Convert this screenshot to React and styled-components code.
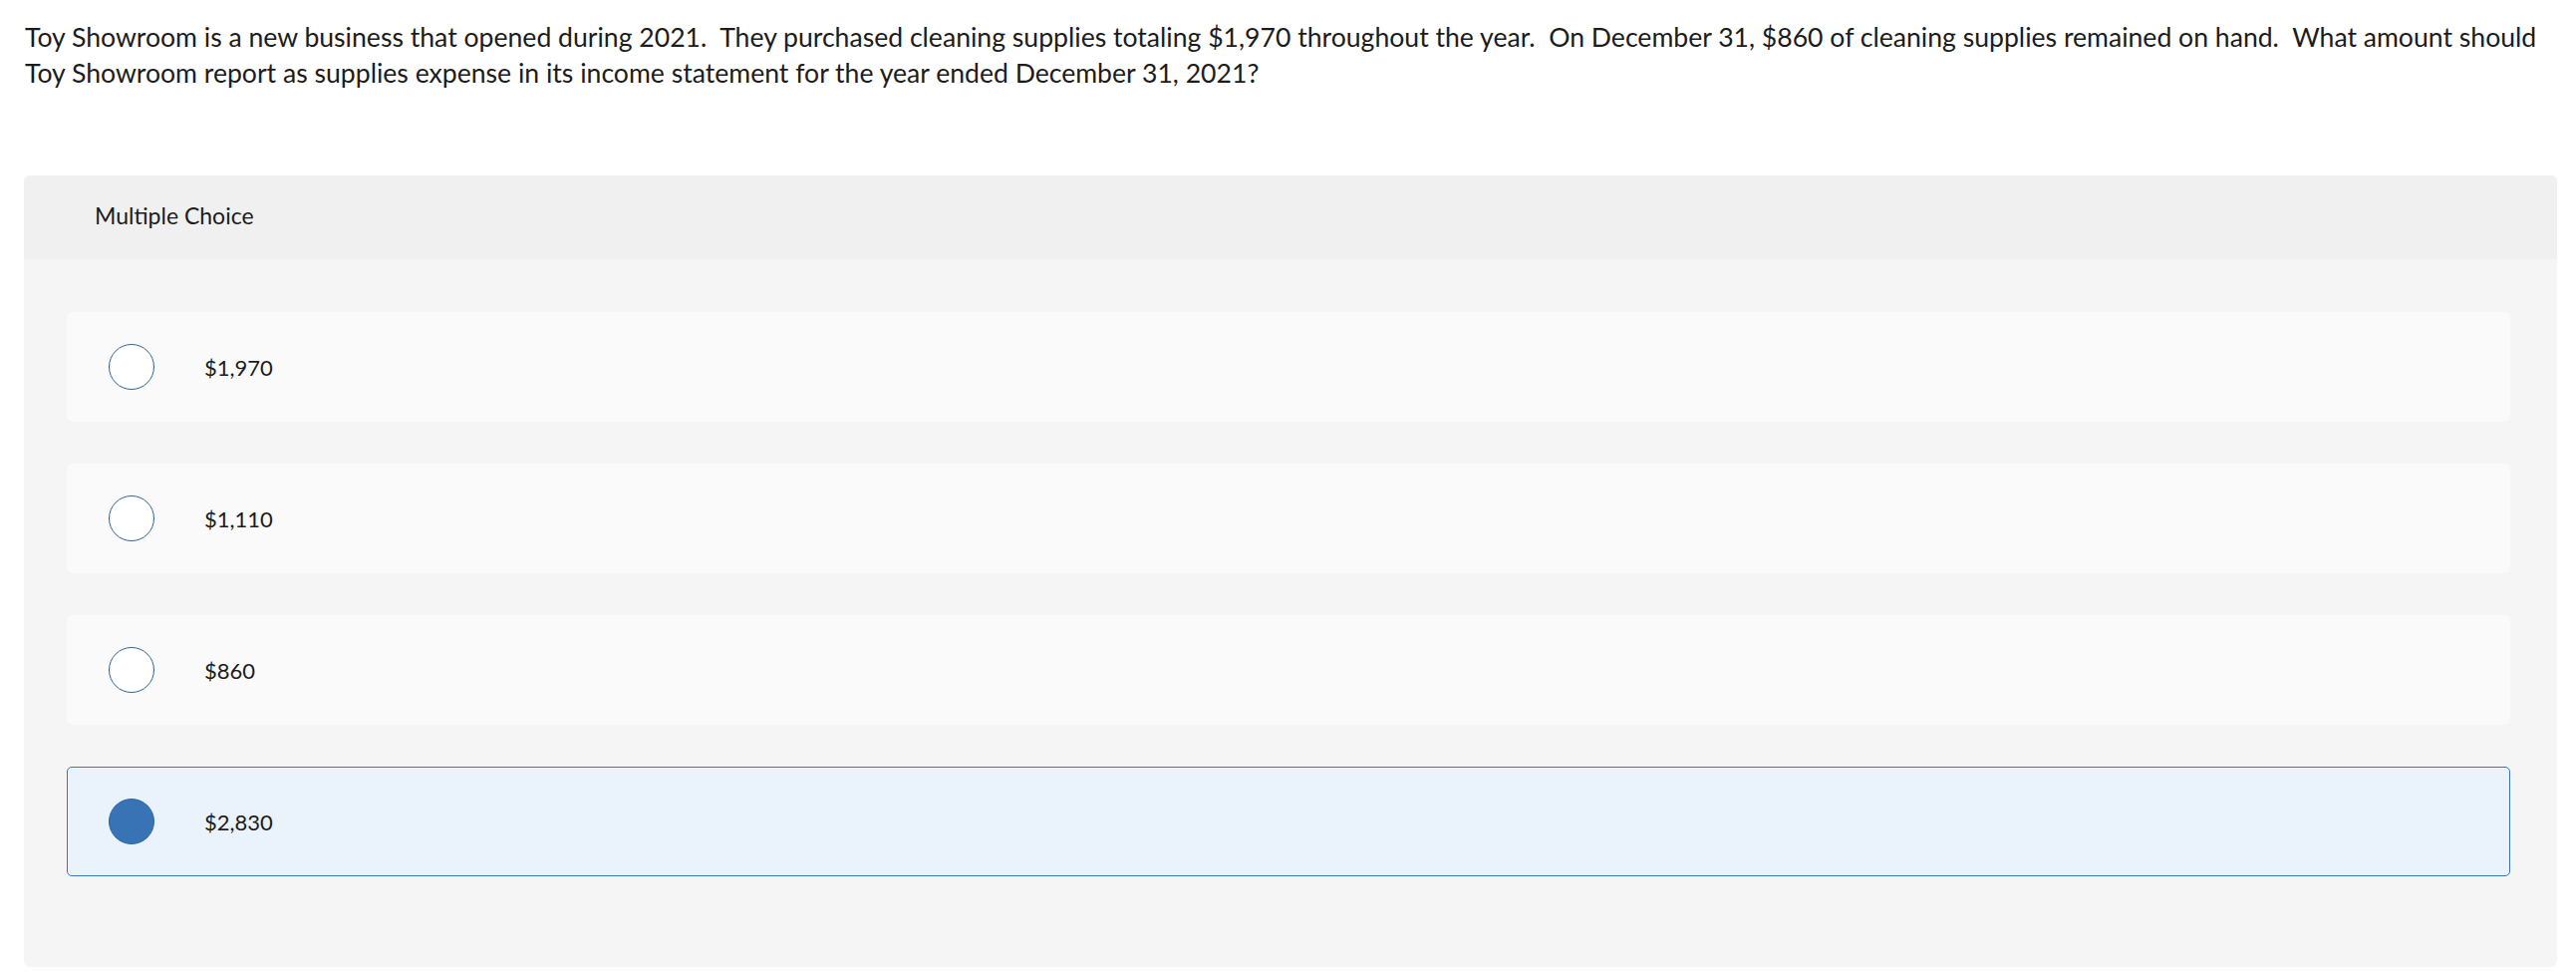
import styled, { createGlobalStyle } from "styled-components";

const GlobalStyle = createGlobalStyle`
  body {
    margin: 0;
    background: #ffffff;
    font-family: Lato, "Open Sans", sans-serif;
    color: #1c1c1c;
  }
`;

const choices = [
  { id: "a", label: "$1,970" },
  { id: "b", label: "$1,110" },
  { id: "c", label: "$860" },
  { id: "d", label: "$2,830", selected: true },
];

export default function App() {
  return (
    <Page>
      <GlobalStyle />
      <Question>
        Toy Showroom is a new business that opened during 2021.&nbsp; They purchased cleaning supplies
        totaling $1,970 throughout the year.&nbsp; On December 31, $860 of cleaning supplies remained on
        hand.&nbsp; What amount should Toy Showroom report as supplies expense in its income statement
        for the year ended December 31, 2021?
      </Question>
      <Panel>
        <PanelHeader>Multiple Choice</PanelHeader>
        <ChoiceList>
          {choices.map((c) => (
            <Choice key={c.id} $selected={c.selected}>
              <Radio $selected={c.selected} />
              <ChoiceLabel>{c.label}</ChoiceLabel>
            </Choice>
          ))}
        </ChoiceList>
      </Panel>
    </Page>
  );
}

const Page = styled.div`
  padding: 19px 19px 7px 24px;
`;

const Question = styled.p`
  margin: 0 0 85px 1px;
  max-width: 2530px;
  font-size: 26.6px;
  line-height: 36px;
`;

const Panel = styled.section`
  background: #f5f5f5;
  border-radius: 6px;
  overflow: hidden;
`;

const PanelHeader = styled.header`
  height: 84px;
  background: #f0f0f0;
  display: flex;
  align-items: center;
  padding-left: 71px;
  padding-bottom: 4px;
  box-sizing: border-box;
  font-size: 23px;
`;

const ChoiceList = styled.div`
  display: flex;
  flex-direction: column;
  gap: 42px;
  padding: 53px 47px 91px 43px;
`;

const Choice = styled.div`
  height: 110px;
  box-sizing: border-box;
  display: flex;
  align-items: center;
  padding-left: ${(p) => (p.$selected ? "41px" : "42px")};
  border-radius: 5px;
  background: ${(p) => (p.$selected ? "#eaf2fb" : "#fafafa")};
  border: ${(p) => (p.$selected ? "1.5px solid #3a75ba" : "none")};
`;

const Radio = styled.span`
  width: 46px;
  height: 46px;
  box-sizing: border-box;
  border-radius: 50%;
  flex-shrink: 0;
  background: ${(p) => (p.$selected ? "#3873b6" : "#ffffff")};
  border: 1.5px solid ${(p) => (p.$selected ? "#2e66a6" : "#2f6299")};
`;

const ChoiceLabel = styled.span`
  margin-left: 50px;
  font-size: 22px;
`;
